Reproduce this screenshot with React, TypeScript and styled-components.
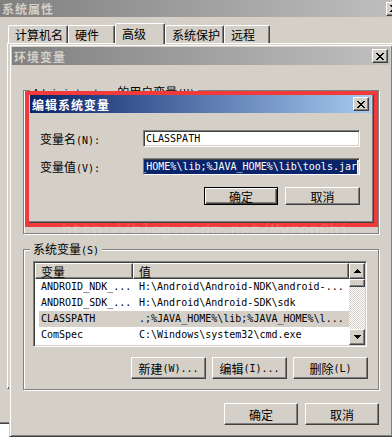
import React from 'react';
import styled, { createGlobalStyle, css } from 'styled-components';

const FACE = '#d4d0c8';

const GlobalStyle = createGlobalStyle`
  html, body { margin: 0; padding: 0; background: #fff; }
  body {
    font-family: "Noto Sans CJK SC", "Noto Sans", sans-serif;
    font-size: 12px;
    color: #000;
  }
  * { box-sizing: border-box; }
`;

const raised = css`
  border: 1px solid;
  border-color: #fff #404040 #404040 #fff;
  box-shadow: inset -1px -1px #808080;
`;

const Desktop = styled.div`
  position: relative;
  width: 392px;
  height: 439px;
  overflow: hidden;
  background: #fff;
`;

// windows sit on a free desktop, so they're placed by coordinates
const Window = styled.div<{ $left: number; $top: number; $width: number; $height: number }>`
  position: absolute;
  left: ${p => p.$left}px;
  top: ${p => p.$top}px;
  width: ${p => p.$width}px;
  height: ${p => p.$height}px;
  display: flex;
  flex-direction: column;
  padding: 2px;
  background: ${FACE};
  border: 1px solid;
  border-color: ${FACE} #404040 #404040 ${FACE};
  box-shadow: inset 1px 1px #fff, inset -1px -1px #808080;
`;

const TitleBar = styled.div<{ $active?: boolean; $h: number }>`
  flex: none;
  height: ${p => p.$h}px;
  display: flex;
  align-items: center;
  justify-content: space-between;
  padding: 0 2px 0 2px;
  background: ${p =>
    p.$active
      ? 'linear-gradient(to right, #0a246a, #a6caf0)'
      : 'linear-gradient(to right, #808080, #c0c0c0)'};
  color: ${p => (p.$active ? '#fff' : FACE)};
  font-weight: bold;
  font-size: 12px;
  letter-spacing: 1px;
  white-space: nowrap;
`;

const CloseBtn = styled.div`
  flex: none;
  width: 16px;
  height: 14px;
  display: flex;
  align-items: center;
  justify-content: center;
  background: ${FACE};
  ${raised};
`;

const XIcon = () => (
  <svg width="8" height="7" viewBox="0 0 8 7" shapeRendering="crispEdges">
    <path
      d="M0 0h2v1H0zM6 0h2v1H6zM1 1h2v1H1zM5 1h2v1H5zM2 2h4v1H2zM3 3h2v1H3zM2 4h4v1H2zM1 5h2v1H1zM5 5h2v1H5zM0 6h2v1H0zM6 6h2v1H6z"
      fill="#000"
    />
  </svg>
);

const Mono = styled.span`
  font-family: "DejaVu Sans Mono", "Liberation Mono", monospace;
  font-size: 10px;
  letter-spacing: 0;
`;

/* ---------- system properties (back window) ---------- */

const SysBody = styled.div`
  flex: 1;
  display: flex;
  flex-direction: column;
  padding: 6px 0 32px 7px;
`;

const TabStrip = styled.div`
  position: relative;
  z-index: 1;
  height: 20px;
  display: flex;
  align-items: flex-end;
  padding-left: 1px;
`;

const Tab = styled.div<{ $w: number; $selected?: boolean }>`
  width: ${p => p.$w}px;
  height: ${p => (p.$selected ? 21 : 18)}px;
  margin-bottom: ${p => (p.$selected ? -1 : 0)}px;
  padding: ${p => (p.$selected ? 2 : 1)}px 0 0 6px;
  background: ${FACE};
  border: 1px solid;
  border-bottom: none;
  border-color: #fff #404040 transparent #fff;
  border-radius: 2px 2px 0 0;
  box-shadow: inset -1px 0 #808080;
  line-height: 15px;
  white-space: nowrap;
`;

const TabPanel = styled.div`
  flex: 1;
  background: ${FACE};
  ${raised};
`;

/* ---------- environment variables window ---------- */

const EnvBody = styled.div`
  flex: 1;
  display: flex;
  flex-direction: column;
  padding: 0 11px;
`;

const GroupFrame = styled.div<{ $height: number; $mt: number }>`
  position: relative;
  height: ${p => p.$height}px;
  margin-top: ${p => p.$mt}px;
  display: flex;
  flex-direction: column;
  padding: 11px 10px 10px 9px;
  border: 1px solid #808080;
  box-shadow: inset 1px 1px #fff, 1px 1px #fff;
`;

const Legend = styled.span<{ $top?: number }>`
  position: absolute;
  top: ${p => p.$top ?? -8}px;
  left: 6px;
  padding: 0 3px;
  background: ${FACE};
  line-height: 14px;
  white-space: nowrap;
`;

const ListView = styled.div`
  height: 86px;
  margin-right: 1px;
  display: flex;
  padding: 1px;
  background: #fff;
  border: 1px solid;
  border-color: #808080 #fff #fff #808080;
  box-shadow: inset 1px 1px #404040, inset -1px -1px ${FACE};
  overflow: hidden;
`;

const ListMain = styled.div`
  flex: 1;
  display: flex;
  flex-direction: column;
  overflow: hidden;
`;

const HeaderRow = styled.div`
  flex: none;
  height: 16px;
  display: flex;
`;

const HeaderCell = styled.div<{ $w?: number }>`
  ${p => (p.$w ? `width: ${p.$w}px;` : 'flex: 1;')}
  height: 16px;
  display: flex;
  align-items: center;
  padding-left: 5px;
  background: ${FACE};
  ${raised};
`;

const Row = styled.div<{ $selected?: boolean }>`
  flex: none;
  height: 16px;
  margin-left: 4px;
  display: flex;
  align-items: center;
  background: ${p => (p.$selected ? FACE : 'transparent')};
  white-space: nowrap;
`;

const NameCell = styled(Mono)`
  width: 94px;
  padding-left: 2px;
  line-height: 16px;
  overflow: hidden;
`;

const ValueCell = styled(Mono)`
  flex: 1;
  padding-left: 6px;
  line-height: 16px;
  overflow: hidden;
`;

const ScrollBar = styled.div`
  flex: none;
  width: 16px;
  display: flex;
  flex-direction: column;
`;

const ScrollBtn = styled.div`
  flex: none;
  height: 16px;
  display: flex;
  align-items: center;
  justify-content: center;
  background: ${FACE};
  ${raised};
`;

const Thumb = styled.div`
  flex: none;
  height: 8px;
  background: ${FACE};
  ${raised};
`;

const Track = styled.div`
  flex: 1;
  background: repeating-conic-gradient(#fff 0 25%, ${FACE} 0 50%) 0 0 / 2px 2px;
`;

const Arrow = ({ down }: { down?: boolean }) => (
  <svg
    width="7"
    height="4"
    viewBox="0 0 7 4"
    shapeRendering="crispEdges"
    style={down ? { transform: 'rotate(180deg)' } : undefined}
  >
    <path d="M3 0h1v1h1v1h1v1h1v1H0V3h1V2h1V1h1z" fill="#000" />
  </svg>
);

const ButtonRow = styled.div<{ $mt: number; $gap: number }>`
  flex: none;
  margin-top: ${p => p.$mt}px;
  display: flex;
  justify-content: flex-end;
  gap: ${p => p.$gap}px;
`;

const Btn = styled.div<{ $w?: number; $h?: number; $default?: boolean }>`
  flex: none;
  width: ${p => p.$w ?? 75}px;
  height: ${p => p.$h ?? 22}px;
  display: flex;
  align-items: center;
  justify-content: center;
  background: ${FACE};
  white-space: nowrap;
  ${p =>
    p.$default
      ? css`
          border: 1px solid #000;
          box-shadow: inset 1px 1px #fff, inset -1px -1px #404040, inset -2px -2px #808080;
        `
      : raised};
`;

/* ---------- edit dialog ---------- */

const DlgBody = styled.div`
  flex: 1;
  display: flex;
  flex-direction: column;
  padding: 17px 11px 0 10px;
`;

const FieldRow = styled.div<{ $mt: number }>`
  display: flex;
  align-items: center;
  margin-top: ${p => p.$mt}px;
`;

const FieldLabel = styled.div`
  width: 103px;
  white-space: nowrap;
`;

const TextField = styled.div<{ $end?: boolean }>`
  width: 217px;
  height: 17px;
  display: flex;
  align-items: center;
  justify-content: ${p => (p.$end ? 'flex-end' : 'flex-start')};
  padding: 0 2px;
  overflow: hidden;
  background: #fff;
  border: 1px solid;
  border-color: #808080 #fff #fff #808080;
  box-shadow: inset 1px 1px #404040, inset -1px -1px ${FACE};
  white-space: nowrap;
`;

const FieldText = styled(Mono)`
  flex: none;
  line-height: 13px;
  padding-bottom: 1px;
`;

const SelectedText = styled(FieldText)`
  background: #0a246a;
  color: #fff;
`;

const Highlight = styled.div`
  position: absolute;
  left: 25px;
  top: 91px;
  width: 353px;
  height: 136px;
  border: 4px solid #f33a3a;
  pointer-events: none;
`;

const Watermark = styled.div`
  position: absolute;
  left: 62px;
  top: 221px;
  font-family: "Liberation Mono", monospace;
  font-size: 16.5px;
  color: rgba(255, 255, 255, 0.16);
  white-space: nowrap;
  pointer-events: none;
`;

const tabs = [
  { label: '计算机名', w: 60 },
  { label: '硬件', w: 47 },
  { label: '高级', w: 50, selected: true },
  { label: '系统保护', w: 59 },
  { label: '远程', w: 46 },
];

const rows = [
  { name: 'ANDROID_NDK_...', value: 'H:\\Android\\Android-NDK\\android-...' },
  { name: 'ANDROID_SDK_...', value: 'H:\\Android\\Android-SDK\\sdk' },
  { name: 'CLASSPATH', value: '.;%JAVA_HOME%\\lib;%JAVA_HOME%\\l...', selected: true },
  { name: 'ComSpec', value: 'C:\\Windows\\system32\\cmd.exe' },
];

const App = () => {
  return (
    <Desktop>
      <GlobalStyle />

      <Window $left={-3} $top={-3} $width={410} $height={427}>
        <TitleBar $h={17}>
          系统属性
          <CloseBtn>
            <XIcon />
          </CloseBtn>
        </TitleBar>
        <SysBody>
          <TabStrip>
            {tabs.map(t => (
              <Tab key={t.label} $w={t.w} $selected={t.selected}>
                {t.label}
              </Tab>
            ))}
          </TabStrip>
          <TabPanel />
        </SysBody>
      </Window>

      <Window $left={9} $top={44} $width={384} $height={393}>
        <TitleBar $h={18}>
          环境变量
          <CloseBtn>
            <XIcon />
          </CloseBtn>
        </TitleBar>
        <EnvBody>
          <GroupFrame $height={144} $mt={25}>
            <Legend $top={-6}>
              <Mono>Administrator </Mono>的用户变量<Mono>(U)</Mono>
            </Legend>
          </GroupFrame>

          <GroupFrame $height={141} $mt={15}>
            <Legend>
              系统变量<Mono>(S)</Mono>
            </Legend>
            <ListView>
              <ListMain>
                <HeaderRow>
                  <HeaderCell $w={98}>变量</HeaderCell>
                  <HeaderCell>值</HeaderCell>
                </HeaderRow>
                {rows.map(r => (
                  <Row key={r.name} $selected={r.selected}>
                    <NameCell>{r.name}</NameCell>
                    <ValueCell>{r.value}</ValueCell>
                  </Row>
                ))}
              </ListMain>
              <ScrollBar>
                <ScrollBtn>
                  <Arrow />
                </ScrollBtn>
                <Thumb />
                <Track />
                <ScrollBtn>
                  <Arrow down />
                </ScrollBtn>
              </ScrollBar>
            </ListView>
            <ButtonRow $mt={10} $gap={6}>
              <Btn>
                新建<Mono>(W)...</Mono>
              </Btn>
              <Btn>
                编辑<Mono>(I)...</Mono>
              </Btn>
              <Btn>
                删除<Mono>(L)</Mono>
              </Btn>
            </ButtonRow>
          </GroupFrame>

          <ButtonRow $mt={13} $gap={7}>
            <Btn $w={74}>确定</Btn>
            <Btn $w={74}>取消</Btn>
          </ButtonRow>
        </EnvBody>
      </Window>

      <Window $left={27} $top={92} $width={347} $height={131}>
        <TitleBar $active $h={18}>
          编辑系统变量
          <CloseBtn>
            <XIcon />
          </CloseBtn>
        </TitleBar>
        <DlgBody>
          <FieldRow $mt={0}>
            <FieldLabel>
              变量名<Mono>(N):</Mono>
            </FieldLabel>
            <TextField>
              <FieldText>CLASSPATH</FieldText>
            </TextField>
          </FieldRow>
          <FieldRow $mt={11}>
            <FieldLabel>
              变量值<Mono>(V):</Mono>
            </FieldLabel>
            <TextField $end>
              <SelectedText>.;%JAVA_HOME%\lib;%JAVA_HOME%\lib\tools.jar</SelectedText>
            </TextField>
          </FieldRow>
          <ButtonRow $mt={12} $gap={7}>
            <Btn $w={74} $h={18} $default>
              确定
            </Btn>
            <Btn $w={75} $h={18}>
              取消
            </Btn>
          </ButtonRow>
        </DlgBody>
      </Window>

      <Highlight />
      <Watermark>http://blog.csdn.net/MyronChi</Watermark>
    </Desktop>
  );
};

export default App;
